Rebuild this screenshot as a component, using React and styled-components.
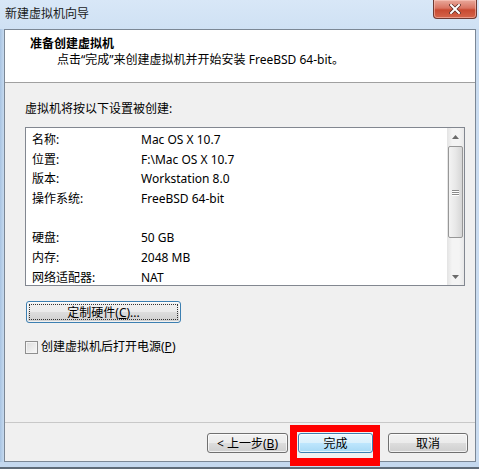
import React from "react";
import styled, { createGlobalStyle, css } from "styled-components";

const GlobalStyle = createGlobalStyle`
  html, body {
    margin: 0;
    padding: 0;
  }
  body {
    font-family: "Noto Sans", "Noto Sans CJK SC", sans-serif;
    font-size: 12px;
    color: #000;
    background: #fff;
  }
`;

const Window = styled.div`
  position: relative;
  width: 479px;
  height: 469px;
  display: flex;
  flex-direction: column;
  background: linear-gradient(to right, #a9c4e2 0px, #c6daef 4px, #d3e3f4 50%, #cadcf0 100%);
  overflow: hidden;
`;

const TitleBar = styled.div`
  height: 29px;
  display: flex;
  justify-content: space-between;
  align-items: flex-start;
  background: linear-gradient(to bottom, #d8e7f7, #cfe1f4);
`;

const Title = styled.div`
  padding: 6px 0 0 5px;
  line-height: 16px;
  font-size: 12px;
  color: #1a1a1a;
`;

const CloseButton = styled.div`
  width: 44px;
  height: 19px;
  margin-right: 2px;
  box-sizing: border-box;
  border: 1px solid #6e3a33;
  border-top: none;
  border-radius: 0 0 4px 4px;
  background: linear-gradient(to bottom, #e9a99b 0%, #d97462 45%, #c84a31 55%, #d5654b 100%);
  display: flex;
  align-items: center;
  justify-content: center;
  box-shadow: inset 0 0 0 1px rgba(255, 210, 200, 0.5);
`;

const Client = styled.div`
  flex: 1;
  margin: 0 3px 0 4px;
  border: 1px solid #7b8795;
  display: flex;
  flex-direction: column;
  background: #f0f0f0;
`;

const BottomFrame = styled.div`
  height: 7px;
  background: linear-gradient(to bottom, #c4d8ee 0, #c4d8ee 5px, #5f6b78 5px, #5f6b78 100%);
`;

const Header = styled.div`
  height: 53px;
  box-sizing: border-box;
  background: #fff;
  border-bottom: 1px solid #a0a0a0;
  padding: 6px 0 0 25px;
`;

const HeaderTitle = styled.div`
  font-weight: bold;
  line-height: 16px;
`;

const HeaderSub = styled.div`
  line-height: 16px;
  padding-left: 27px;
`;

const Body = styled.div`
  flex: 1;
  padding: 18px 10px 0 20px;
`;

const Caption = styled.div`
  line-height: 16px;
  margin-bottom: 10px;
`;

const ListBox = styled.div`
  height: 159px;
  box-sizing: border-box;
  border: 1px solid #828790;
  background: #fff;
  display: flex;
`;

const ListRows = styled.div`
  flex: 1;
  padding: 2px 0 0 6px;
  overflow: hidden;
`;

const Row = styled.div`
  height: 19.7px;
  line-height: 19.7px;
  display: grid;
  grid-template-columns: 109px 1fr;
  white-space: nowrap;
`;

const ScrollBar = styled.div`
  width: 17px;
  display: flex;
  flex-direction: column;
  background: linear-gradient(to right, #e3e3e3, #f4f4f4 30%, #f4f4f4 70%, #e8e8e8);
`;

const ArrowBox = styled.div`
  height: 17px;
  display: flex;
  align-items: center;
  justify-content: center;
`;

const Track = styled.div`
  flex: 1;
  padding: 1px 1px 0 1px;
`;

const Thumb = styled.div`
  height: 92px;
  box-sizing: border-box;
  border: 1px solid #979797;
  border-radius: 2px;
  background: linear-gradient(to right, #f3f3f3, #e8e8e8 50%, #d6d6d6);
  display: flex;
  flex-direction: column;
  align-items: center;
  justify-content: center;
  gap: 1px;
`;

const Grip = styled.div`
  width: 7px;
  height: 1px;
  background: #8a8a8a;
  box-shadow: 0 1px 0 #fff;
`;

const buttonBase = css`
  box-sizing: border-box;
  border: 1px solid #707070;
  border-radius: 3px;
  font-family: "Noto Sans", "Noto Sans CJK SC", sans-serif;
  font-size: 12px;
  color: #000;
  display: flex;
  align-items: center;
  justify-content: center;
  background: linear-gradient(to bottom, #f2f2f2 0%, #ebebeb 50%, #dddddd 51%, #cfcfcf 100%);
  box-shadow: inset 0 0 0 1px rgba(255, 255, 255, 0.7);
  padding: 0;
`;

const CustomButton = styled.div`
  ${buttonBase};
  width: 155px;
  height: 22px;
  margin: 15px 0 0 1px;
  border-color: #3c7fb1;
  position: relative;
  &::after {
    content: "";
    position: absolute;
    inset: 2px;
    border: 1px dotted #333;
  }
`;

const CheckRow = styled.label`
  display: flex;
  align-items: center;
  gap: 3px;
  margin-top: 16px;
  line-height: 16px;
`;

const CheckBox = styled.span`
  width: 13px;
  height: 13px;
  box-sizing: border-box;
  border: 1px solid #8f8f8f;
  background: linear-gradient(135deg, #dcdcdc, #f8f8f8);
  box-shadow: inset 0 0 0 1px #f4f4f4;
`;

const Footer = styled.div`
  height: 39px;
  box-sizing: border-box;
  border-top: 1px solid #c8c8c8;
  display: flex;
  justify-content: flex-end;
  align-items: flex-start;
  padding: 10px 7px 0 0;
`;

const DialogButton = styled.div`
  ${buttonBase};
  width: ${(p) => p.$w}px;
  height: 20px;
  margin-left: ${(p) => p.$gap}px;
  ${(p) =>
    p.$primary &&
    css`
      border-color: #3c7fb1;
      background: linear-gradient(to bottom, #eaf6fd 0%, #d9f0fc 50%, #bee6fd 51%, #a7d9f5 100%);
    `}
`;

const Highlight = styled.div`
  position: absolute;
  left: 290px;
  top: 425px;
  width: 90px;
  height: 41px;
  box-sizing: border-box;
  border: 7px solid #ff0000;
  border-bottom-width: 8px;
`;

const U = styled.span`
  text-decoration: underline;
`;

const rows = [
  ["名称:", "Mac OS X 10.7"],
  ["位置:", "F:\\Mac OS X 10.7"],
  ["版本:", "Workstation 8.0"],
  ["操作系统:", "FreeBSD 64-bit"],
  ["", ""],
  ["硬盘:", "50 GB"],
  ["内存:", "2048 MB"],
  ["网络适配器:", "NAT"],
];

function Arrow({ up }) {
  return (
    <svg width="7" height="4" viewBox="0 0 7 4">
      <path d={up ? "M0 4 L3.5 0 L7 4 Z" : "M0 0 L3.5 4 L7 0 Z"} fill="#6b6b6b" />
    </svg>
  );
}

export default function App() {
  return (
    <>
      <GlobalStyle />
      <Window>
        <TitleBar>
          <Title>新建虚拟机向导</Title>
          <CloseButton>
            <svg width="12" height="10" viewBox="0 0 12 10">
              <path d="M2 1 L10 9 M10 1 L2 9" stroke="#5a2a22" strokeWidth="3.4" strokeLinecap="square" />
              <path d="M2 1 L10 9 M10 1 L2 9" stroke="#fff" strokeWidth="2" strokeLinecap="square" />
            </svg>
          </CloseButton>
        </TitleBar>
        <Client>
          <Header>
            <HeaderTitle>准备创建虚拟机</HeaderTitle>
            <HeaderSub>点击“完成”来创建虚拟机并开始安装 FreeBSD 64-bit。</HeaderSub>
          </Header>
          <Body>
            <Caption>虚拟机将按以下设置被创建:</Caption>
            <ListBox>
              <ListRows>
                {rows.map(([k, v], i) => (
                  <Row key={i}>
                    <span>{k}</span>
                    <span>{v}</span>
                  </Row>
                ))}
              </ListRows>
              <ScrollBar>
                <ArrowBox>
                  <Arrow up />
                </ArrowBox>
                <Track>
                  <Thumb>
                    <Grip />
                    <Grip />
                    <Grip />
                  </Thumb>
                </Track>
                <ArrowBox>
                  <Arrow />
                </ArrowBox>
              </ScrollBar>
            </ListBox>
            <CustomButton>
              定制硬件(<U>C</U>)...
            </CustomButton>
            <CheckRow>
              <CheckBox />
              <span>
                创建虚拟机后打开电源(<U>P</U>)
              </span>
            </CheckRow>
          </Body>
          <Footer>
            <DialogButton $w={81} $gap={0}>
              &lt; 上一步(<U>B</U>)
            </DialogButton>
            <DialogButton $w={75} $gap={10} $primary>
              完成
            </DialogButton>
            <DialogButton $w={80} $gap={15}>
              取消
            </DialogButton>
          </Footer>
        </Client>
        <BottomFrame />
        <Highlight />
      </Window>
    </>
  );
}
